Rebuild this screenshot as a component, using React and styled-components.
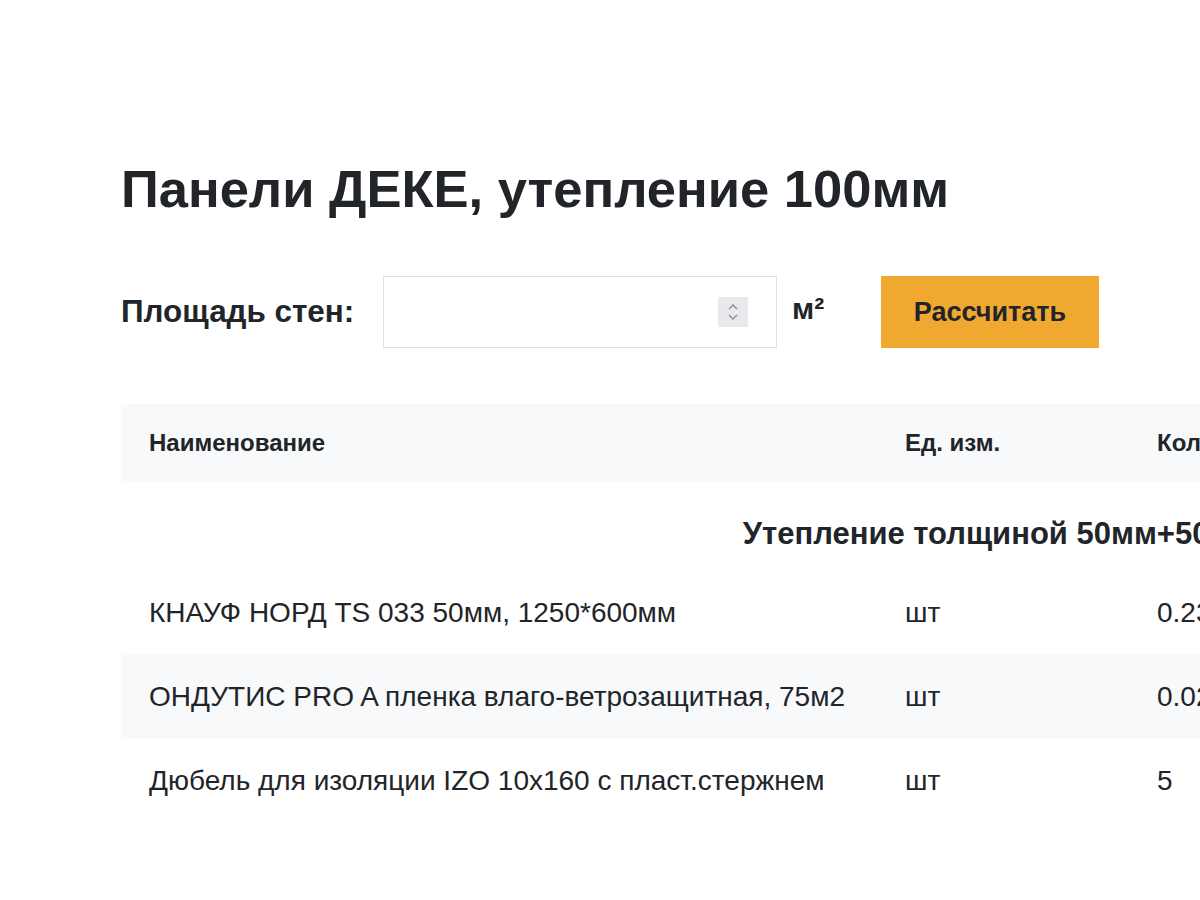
import React from 'react'
import styled, { createGlobalStyle } from 'styled-components'

const GlobalStyle = createGlobalStyle`
    html, body {
        margin: 0;
        padding: 0;
        background: #ffffff;
        overflow: hidden;
    }
    body {
        font-family: "Liberation Sans", Arial, sans-serif;
        color: #212529;
    }
`

const rows = [
    { name: 'КНАУФ НОРД TS 033 50мм, 1250*600мм', unit: 'шт', qty: '0.23' },
    { name: 'ОНДУТИС PRO A пленка влаго-ветрозащитная, 75м2', unit: 'шт', qty: '0.02' },
    { name: 'Дюбель для изоляции IZO 10x160 с пласт.стержнем', unit: 'шт', qty: '5' },
]

function App() {
    return (
        <>
            <GlobalStyle />
            <Page>
                <Title>Панели ДЕКЕ, утепление 100мм</Title>
                <Form>
                    <Label>Площадь стен:</Label>
                    <InputBox>
                        <Spinner>
                            <svg width="14" height="22" viewBox="0 0 14 22" fill="none" stroke="#8a8d93" strokeWidth="1.4">
                                <path d="M3 8 L7 4 L11 8" />
                                <path d="M3 14 L7 18 L11 14" />
                            </svg>
                        </Spinner>
                    </InputBox>
                    <Unit>м²</Unit>
                    <Button>Рассчитать</Button>
                </Form>
                <Table>
                    <colgroup>
                        <col style={{ width: 756 }} />
                        <col style={{ width: 252 }} />
                        <col />
                        <col />
                        <col />
                    </colgroup>
                    <thead>
                        <tr>
                            <Th>Наименование</Th>
                            <Th>Ед. изм.</Th>
                            <Th>Количество</Th>
                            <Th>Цена</Th>
                            <Th>Сумма</Th>
                        </tr>
                    </thead>
                    <tbody>
                        <tr>
                            <GroupCell colSpan={5}>Утепление толщиной 50мм+50мм</GroupCell>
                        </tr>
                        {rows.map((r, i) => (
                            <Row key={i} $striped={i % 2 === 1}>
                                <Td>{r.name}</Td>
                                <Td>{r.unit}</Td>
                                <Td>{r.qty}</Td>
                                <Td></Td>
                                <Td></Td>
                            </Row>
                        ))}
                    </tbody>
                </Table>
            </Page>
        </>
    )
}

const Page = styled.div`
    padding: 158px 0 0 121px;
    width: 1900px;
`

const Title = styled.h1`
    margin: 0 0 56px;
    font-size: 52.5px;
    line-height: 62px;
    font-weight: 700;
    color: #212529;
`

const Form = styled.div`
    display: flex;
    align-items: center;
    margin-bottom: 56px;
`

const Label = styled.div`
    font-size: 31.4px;
    font-weight: 700;
    width: 262px;
`

const InputBox = styled.div`
    width: 392px;
    height: 70px;
    border: 1px solid #dee2e6;
    display: flex;
    align-items: center;
    justify-content: flex-end;
`

const Spinner = styled.div`
    width: 30px;
    height: 30px;
    background: #e9e9ed;
    display: flex;
    align-items: center;
    justify-content: center;
    margin-right: 28px;
`

const Unit = styled.div`
    font-size: 30px;
    font-weight: 700;
    margin: 0 0 6px 15px;
    width: 89px;
`

const Button = styled.button`
    width: 218px;
    height: 72px;
    border: none;
    background: #f0a830;
    color: #212529;
    font-family: "Liberation Sans", Arial, sans-serif;
    font-size: 27px;
    font-weight: 700;
    padding: 0;
`

const Table = styled.table`
    border-collapse: collapse;
    width: 1756px;
    table-layout: fixed;
`

const Th = styled.th`
    background: #f8f9fa;
    height: 77px;
    padding: 0 28px;
    text-align: left;
    font-size: 24px;
    font-weight: 700;
    color: #212529;
    white-space: nowrap;
`

const GroupCell = styled.td`
    height: 74px;
    padding: 16px 28px 0;
    text-align: center;
    font-size: 31px;
    font-weight: 700;
    vertical-align: middle;
    white-space: nowrap;
`

const Row = styled.tr`
    background: ${p => (p.$striped ? '#f8f9fa' : 'transparent')};
`

const Td = styled.td`
    height: 84px;
    padding: 0 28px;
    font-size: 28px;
    color: #212529;
    vertical-align: middle;
    white-space: nowrap;
`

export default App
